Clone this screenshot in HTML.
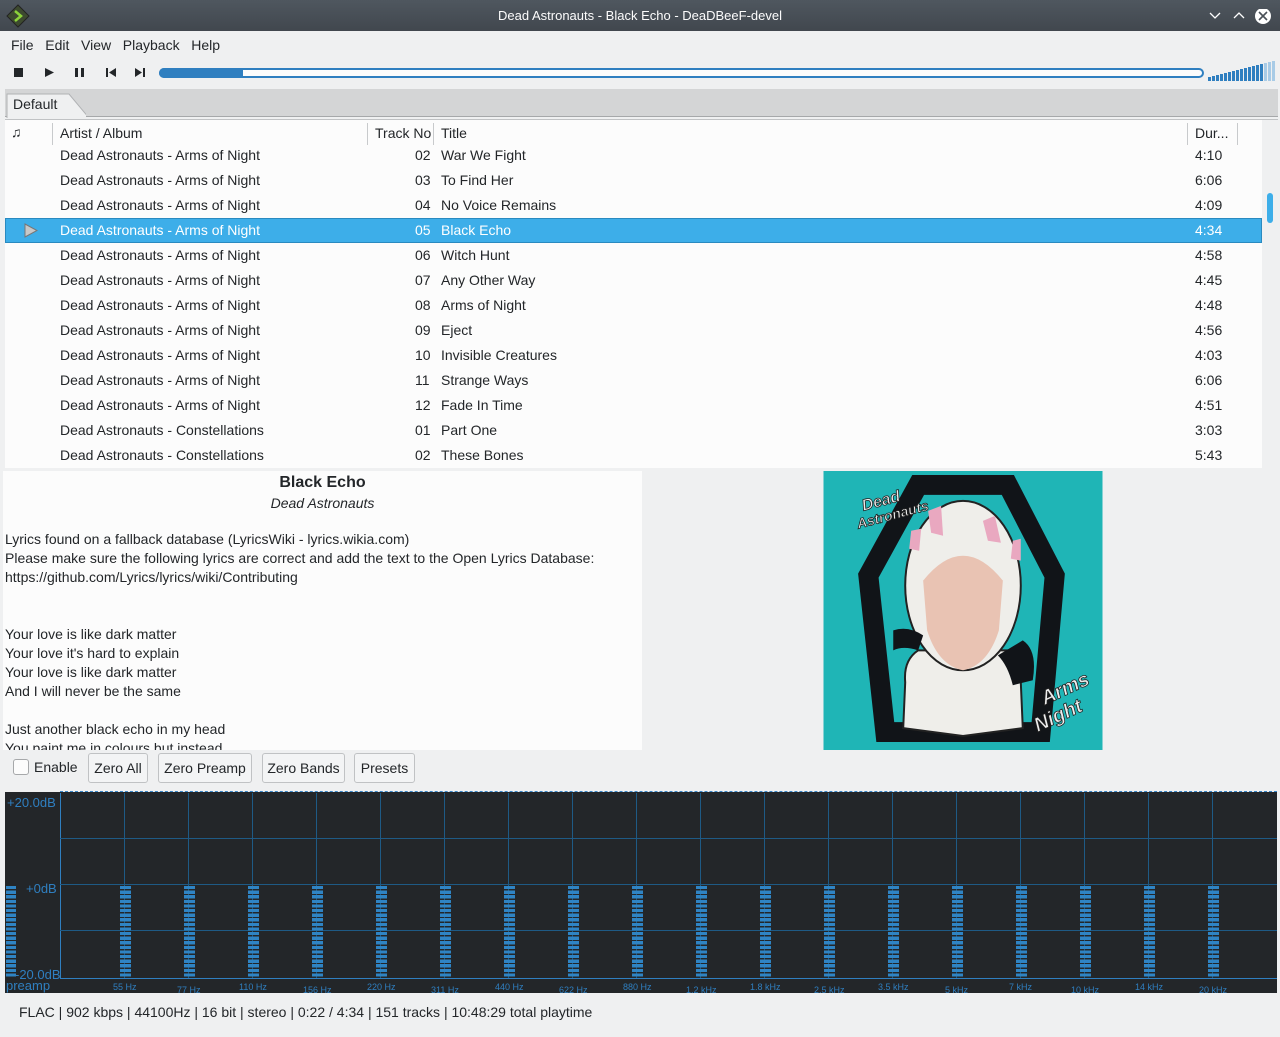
<!DOCTYPE html>
<html><head><meta charset="utf-8"><style>
*{margin:0;padding:0;box-sizing:border-box}
body{width:1280px;height:1037px;overflow:hidden;background:#eff0f1;font-family:"Liberation Sans","DejaVu Sans",sans-serif;font-size:14px;color:#232629;position:relative}
.a{position:absolute;white-space:nowrap}
.title{left:0;top:0;width:1280px;height:31px;background:linear-gradient(#4f575f,#41474e);color:#fcfcfc;font-size:13px;text-align:center;line-height:32px}
.row{position:absolute;left:5px;width:1257px;height:25px;line-height:25px}
.row span{position:absolute}
.sel{background:#3daee9;color:#fff;border:1px solid #2a8ac0;line-height:23px}
.eqbar{position:absolute;top:886px;height:92px;width:11px;background:repeating-linear-gradient(to bottom,#2f84c4 0 3.2px,transparent 3.2px 4.6px)}
.vl{position:absolute;top:793px;height:185px;width:1px;background:#1e5a85}
.fl{position:absolute;font-size:9px;color:#2f7fc0}
.btn{position:absolute;top:753px;height:30px;border:1px solid #c0c2c4;border-radius:3px;background:#f3f4f5;line-height:28px;text-align:center}
</style></head><body>
<div class="a title">Dead Astronauts - Black Echo - DeaDBeeF-devel</div>
<svg class="a" style="left:6px;top:4px" width="24" height="24" viewBox="0 0 24 24"><path d="M12 1 L23 12 L12 23 L1 12Z" fill="#3d4a2f" stroke="#222" /><path d="M9 7 L15 12 L9 17" stroke="#8cd33a" stroke-width="2.5" fill="none"/></svg>
<svg class="a" style="left:1208px;top:9px" width="70" height="16"><path d="M2 4 L7 9 L12 4" stroke="#fff" stroke-width="1.3" fill="none"/><path d="M26 9 L31 4 L36 9" stroke="#fff" stroke-width="1.3" fill="none"/><circle cx="55" cy="7" r="8" fill="#fff"/><path d="M51 3 L59 11 M59 3 L51 11" stroke="#4a5158" stroke-width="1.6"/></svg>
<div class="a menu" style="left:11px;top:37px">File&nbsp;&nbsp;&nbsp;Edit&nbsp;&nbsp;&nbsp;View&nbsp;&nbsp;&nbsp;Playback&nbsp;&nbsp;&nbsp;Help</div>
<svg class="a" style="left:12px;top:66px" width="140" height="14"><rect x="2" y="2" width="9" height="9" fill="#232629"/><path d="M33 2 L42 6.5 L33 11Z" fill="#232629"/><rect x="63" y="2" width="3" height="9" fill="#232629"/><rect x="69" y="2" width="3" height="9" fill="#232629"/><rect x="94" y="2" width="2" height="9" fill="#232629"/><path d="M104 2 L97 6.5 L104 11Z" fill="#232629"/><path d="M123 2 L130 6.5 L123 11Z" fill="#232629"/><rect x="131" y="2" width="2" height="9" fill="#232629"/></svg>
<div class="a" style="left:159px;top:68px;width:1045px;height:10px;border:2px solid #2f7fc0;border-radius:5px;background:#fcfcfc"></div>
<div class="a" style="left:159px;top:68px;width:84px;height:10px;background:#2f7fc0;border-radius:5px 0 0 5px"></div>
<svg class="a" style="left:1207px;top:61px" width="70" height="20">
<g fill="#2f7fc0"><rect x="1" y="16" width="3" height="4"/><rect x="5" y="15" width="3" height="5"/><rect x="9" y="14" width="3" height="6"/><rect x="13" y="13" width="3" height="7"/><rect x="17" y="12" width="3" height="8"/><rect x="21" y="11" width="3" height="9"/><rect x="25" y="10" width="3" height="10"/><rect x="29" y="9" width="3" height="11"/><rect x="33" y="8" width="3" height="12"/><rect x="37" y="7" width="3" height="13"/><rect x="41" y="6" width="3" height="14"/><rect x="45" y="5" width="3" height="15"/><rect x="49" y="4" width="3" height="16"/><rect x="53" y="3" width="3" height="17"/></g>
<g fill="#a8cbe6"><rect x="57" y="2" width="3" height="18"/><rect x="61" y="1" width="3" height="19"/><rect x="65" y="0" width="3" height="20"/></g></svg>
<div class="a" style="left:5px;top:89px;width:1273px;height:28px;background:#d4d5d6;border-bottom:1px solid #a6a8aa"></div>
<svg class="a" style="left:6px;top:92px" width="80" height="26"><path d="M1 26 L1 2 L63 2 L83 26" fill="#eff0f1" stroke="#b0b2b4"/></svg>
<div class="a" style="left:13px;top:96px">Default</div>
<div class="a" style="left:5px;top:119px;width:1273px;height:1px;background:#c0c2c4"></div>
<div class="a" style="left:5px;top:120px;width:1257px;height:348px;background:#fcfcfc"></div>
<div class="a" style="left:11px;top:124px">♫</div>
<div class="a" style="left:52px;top:123px;width:1px;height:22px;background:#c8cacc"></div>
<div class="a" style="left:60px;top:125px">Artist / Album</div>
<div class="a" style="left:367px;top:123px;width:1px;height:22px;background:#c8cacc"></div>
<div class="a" style="left:375px;top:125px">Track No</div>
<div class="a" style="left:433px;top:123px;width:1px;height:22px;background:#c8cacc"></div>
<div class="a" style="left:441px;top:125px">Title</div>
<div class="a" style="left:1187px;top:123px;width:1px;height:22px;background:#c8cacc"></div>
<div class="a" style="left:1195px;top:125px">Dur...</div>
<div class="a" style="left:1237px;top:123px;width:1px;height:22px;background:#c8cacc"></div>
<div class="a" style="left:1266px;top:147px;width:8px;height:320px;background:#eff0f1"></div>
<div class="a" style="left:1267px;top:193px;width:6px;height:30px;background:#3daee9;border-radius:3px"></div>

<div class="row" style="top:143px"><span style="left:55px">Dead Astronauts - Arms of Night</span><span style="left:410px">02</span><span style="left:436px">War We Fight</span><span style="left:1190px">4:10</span></div>
<div class="row" style="top:168px"><span style="left:55px">Dead Astronauts - Arms of Night</span><span style="left:410px">03</span><span style="left:436px">To Find Her</span><span style="left:1190px">6:06</span></div>
<div class="row" style="top:193px"><span style="left:55px">Dead Astronauts - Arms of Night</span><span style="left:410px">04</span><span style="left:436px">No Voice Remains</span><span style="left:1190px">4:09</span></div>
<div class="row sel" style="top:218px"><svg style="position:absolute;left:18px;top:4px" width="14" height="15"><path d="M1 1 L13 7.5 L1 14Z" fill="#c8c8c8" stroke="#777"/></svg><span style="left:54px">Dead Astronauts - Arms of Night</span><span style="left:409px">05</span><span style="left:435px">Black Echo</span><span style="left:1189px">4:34</span></div>
<div class="row" style="top:243px"><span style="left:55px">Dead Astronauts - Arms of Night</span><span style="left:410px">06</span><span style="left:436px">Witch Hunt</span><span style="left:1190px">4:58</span></div>
<div class="row" style="top:268px"><span style="left:55px">Dead Astronauts - Arms of Night</span><span style="left:410px">07</span><span style="left:436px">Any Other Way</span><span style="left:1190px">4:45</span></div>
<div class="row" style="top:293px"><span style="left:55px">Dead Astronauts - Arms of Night</span><span style="left:410px">08</span><span style="left:436px">Arms of Night</span><span style="left:1190px">4:48</span></div>
<div class="row" style="top:318px"><span style="left:55px">Dead Astronauts - Arms of Night</span><span style="left:410px">09</span><span style="left:436px">Eject</span><span style="left:1190px">4:56</span></div>
<div class="row" style="top:343px"><span style="left:55px">Dead Astronauts - Arms of Night</span><span style="left:410px">10</span><span style="left:436px">Invisible Creatures</span><span style="left:1190px">4:03</span></div>
<div class="row" style="top:368px"><span style="left:55px">Dead Astronauts - Arms of Night</span><span style="left:410px">11</span><span style="left:436px">Strange Ways</span><span style="left:1190px">6:06</span></div>
<div class="row" style="top:393px"><span style="left:55px">Dead Astronauts - Arms of Night</span><span style="left:410px">12</span><span style="left:436px">Fade In Time</span><span style="left:1190px">4:51</span></div>
<div class="row" style="top:418px"><span style="left:55px">Dead Astronauts - Constellations</span><span style="left:410px">01</span><span style="left:436px">Part One</span><span style="left:1190px">3:03</span></div>
<div class="row" style="top:443px"><span style="left:55px">Dead Astronauts - Constellations</span><span style="left:410px">02</span><span style="left:436px">These Bones</span><span style="left:1190px">5:43</span></div>

<div class="a" style="left:3px;top:471px;width:639px;height:279px;background:#fcfcfc;overflow:hidden;line-height:19px">
<div style="text-align:center;font-weight:bold;font-size:16px;margin-top:2px;line-height:20px">Black Echo</div>
<div style="text-align:center;font-style:italic;line-height:20px">Dead Astronauts</div>
<div style="padding-left:2px;margin-top:17px">Lyrics found on a fallback database (LyricsWiki - lyrics.wikia.com)<br>Please make sure the following lyrics are correct and add the text to the Open Lyrics Database:<br>https://github.com/Lyrics/lyrics/wiki/Contributing<br><br><br>Your love is like dark matter<br>Your love it's hard to explain<br>Your love is like dark matter<br>And I will never be the same<br><br>Just another black echo in my head<br>You paint me in colours but instead</div></div>
<svg class="a" style="left:823px;top:471px" width="280" height="279" viewBox="0 0 280 280">
<rect width="280" height="280" fill="#1fb5b6"/>
<path d="M95 14 L185 14 L232 105 L218 262 L62 262 L45 105Z" fill="none" stroke="#111418" stroke-width="20"/>
<path d="M82 212 Q80 190 95 180 L185 180 Q200 190 198 212 L200 258 L140 266 L80 258Z" fill="#efeeea" stroke="#222" stroke-width="2"/>
<ellipse cx="140" cy="115" rx="58" ry="85" fill="#efeeea" stroke="#222" stroke-width="2"/>
<path d="M100 110 Q140 60 180 110 L176 160 Q165 195 140 200 Q115 195 104 160Z" fill="#e9c3b3"/>
<g fill="#e9a8c0"><path d="M105 40 L118 35 L120 65 L108 62Z"/><path d="M160 50 L172 45 L178 72 L165 70Z"/><path d="M88 60 L98 58 L96 80 L86 78Z"/><path d="M190 70 L198 68 L198 90 L188 88Z"/></g>
<path d="M200 170 Q215 180 210 210 L190 215 Q185 195 175 185Z" fill="#111418"/>
<path d="M70 160 Q85 155 100 165 L95 180 Q80 175 70 180Z" fill="#111418"/>
<text x="40" y="40" font-family="Liberation Sans" font-weight="bold" font-style="italic" font-size="16" fill="#eee" stroke="#222" stroke-width=".8" transform="rotate(-15 40 40)">Dead</text>
<text x="35" y="58" font-family="Liberation Sans" font-weight="bold" font-style="italic" font-size="14" fill="#eee" stroke="#222" stroke-width=".8" transform="rotate(-15 35 58)">Astronauts</text>
<text x="222" y="235" font-family="Liberation Sans" font-weight="bold" font-style="italic" font-size="20" fill="#eee" stroke="#222" stroke-width=".8" transform="rotate(-25 222 235)">Arms</text>
<text x="215" y="262" font-family="Liberation Sans" font-weight="bold" font-style="italic" font-size="20" fill="#eee" stroke="#222" stroke-width=".8" transform="rotate(-25 215 262)">Night</text>
</svg>

<div class="a" style="left:13px;top:759px;width:16px;height:16px;border:1px solid #a6a8aa;border-radius:3px;background:#fcfcfc"></div>
<div class="a" style="left:34px;top:759px">Enable</div>
<div class="btn" style="left:88px;width:60px">Zero All</div>
<div class="btn" style="left:158px;width:94px">Zero Preamp</div>
<div class="btn" style="left:262px;width:83px">Zero Bands</div>
<div class="btn" style="left:354px;width:61px">Presets</div>

<div class="a" style="left:5px;top:792px;width:1272px;height:201px;background:#232629"></div>
<div class="a" style="left:60px;top:791px;width:1217px;border-top:1px dashed #3a86c6"></div>
<div class="vl" style="left:60px;background:#2f7fc0"></div>
<div class="a" style="left:60px;top:978px;width:1217px;height:1px;background:#2f7fc0"></div>
<div class="a" style="left:60px;top:838px;width:1217px;height:1px;background:#1e5a85"></div>
<div class="a" style="left:60px;top:884px;width:1217px;height:1px;background:#1e5a85"></div>
<div class="a" style="left:60px;top:930px;width:1217px;height:1px;background:#1e5a85"></div>
<div class="vl" style="left:124px"></div><div class="vl" style="left:188px"></div><div class="vl" style="left:252px"></div><div class="vl" style="left:316px"></div><div class="vl" style="left:380px"></div><div class="vl" style="left:444px"></div><div class="vl" style="left:508px"></div><div class="vl" style="left:572px"></div><div class="vl" style="left:636px"></div><div class="vl" style="left:700px"></div><div class="vl" style="left:764px"></div><div class="vl" style="left:828px"></div><div class="vl" style="left:892px"></div><div class="vl" style="left:956px"></div><div class="vl" style="left:1020px"></div><div class="vl" style="left:1084px"></div><div class="vl" style="left:1148px"></div><div class="vl" style="left:1212px"></div>
<div class="eqbar" style="left:6px;width:10px"></div>
<div class="eqbar" style="left:120px"></div><div class="eqbar" style="left:184px"></div><div class="eqbar" style="left:248px"></div><div class="eqbar" style="left:312px"></div><div class="eqbar" style="left:376px"></div><div class="eqbar" style="left:440px"></div><div class="eqbar" style="left:504px"></div><div class="eqbar" style="left:568px"></div><div class="eqbar" style="left:632px"></div><div class="eqbar" style="left:696px"></div><div class="eqbar" style="left:760px"></div><div class="eqbar" style="left:824px"></div><div class="eqbar" style="left:888px"></div><div class="eqbar" style="left:952px"></div><div class="eqbar" style="left:1016px"></div><div class="eqbar" style="left:1080px"></div><div class="eqbar" style="left:1144px"></div><div class="eqbar" style="left:1208px"></div>
<div class="a" style="left:7px;top:795px;font-size:13px;color:#2f7fc0">+20.0dB</div>
<div class="a" style="left:26px;top:881px;font-size:13px;color:#2f7fc0">+0dB</div>
<div class="a" style="left:15px;top:967px;font-size:13px;color:#2f7fc0">-20.0dB</div>
<div class="a" style="left:6px;top:978px;font-size:13px;color:#2f7fc0">preamp</div>
<div class="fl" style="left:113px;top:982px">55 Hz</div><div class="fl" style="left:177px;top:985px">77 Hz</div><div class="fl" style="left:239px;top:982px">110 Hz</div><div class="fl" style="left:303px;top:985px">156 Hz</div><div class="fl" style="left:367px;top:982px">220 Hz</div><div class="fl" style="left:431px;top:985px">311 Hz</div><div class="fl" style="left:495px;top:982px">440 Hz</div><div class="fl" style="left:559px;top:985px">622 Hz</div><div class="fl" style="left:623px;top:982px">880 Hz</div><div class="fl" style="left:686px;top:985px">1.2 kHz</div><div class="fl" style="left:750px;top:982px">1.8 kHz</div><div class="fl" style="left:814px;top:985px">2.5 kHz</div><div class="fl" style="left:878px;top:982px">3.5 kHz</div><div class="fl" style="left:945px;top:985px">5 kHz</div><div class="fl" style="left:1009px;top:982px">7 kHz</div><div class="fl" style="left:1071px;top:985px">10 kHz</div><div class="fl" style="left:1135px;top:982px">14 kHz</div><div class="fl" style="left:1199px;top:985px">20 kHz</div>
<div class="a" style="left:19px;top:1004px">FLAC | 902 kbps | 44100Hz | 16 bit | stereo | 0:22 / 4:34 | 151 tracks | 10:48:29 total playtime</div>
</body></html>
